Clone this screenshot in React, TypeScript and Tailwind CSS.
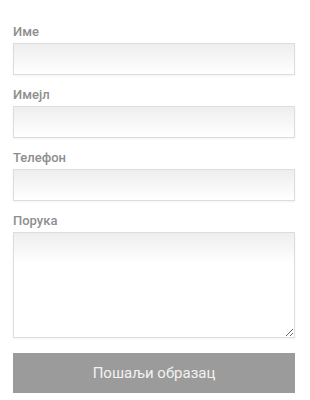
import React from "react";

const inputCls =
  "block w-[282px] border border-[#dddddd] bg-[linear-gradient(to_bottom,#eeeeee,#ffffff_30px)] shadow-[0_1px_2px_rgba(0,0,0,0.05)] outline-none";
const labelCls = "block text-[13px] leading-[18px] font-medium text-[#8e8e8e] mb-[2px]";

export default function App() {
  return (
    <div className="w-[310px] h-[400px] bg-white pl-[13px] pt-[23px]" style={{ fontFamily: "Roboto, 'Noto Sans', sans-serif" }}>
      <form className="flex flex-col">
        <label className={labelCls}>Име</label>
        <input className={`${inputCls} h-[32px]`} />
        <label className={`${labelCls} mt-[11px]`}>Имејл</label>
        <input className={`${inputCls} h-[32px]`} />
        <label className={`${labelCls} mt-[11px]`}>Телефон</label>
        <input className={`${inputCls} h-[32px]`} />
        <label className={`${labelCls} mt-[11px]`}>Порука</label>
        <textarea className={`${inputCls} h-[106px] resize-y`} />
        <button
          type="button"
          className="mt-[15px] w-[282px] h-[40px] bg-[#9b9b9b] text-[#f2f2f2] text-[15px]"
        >
          Пошаљи образац
        </button>
      </form>
    </div>
  );
}
